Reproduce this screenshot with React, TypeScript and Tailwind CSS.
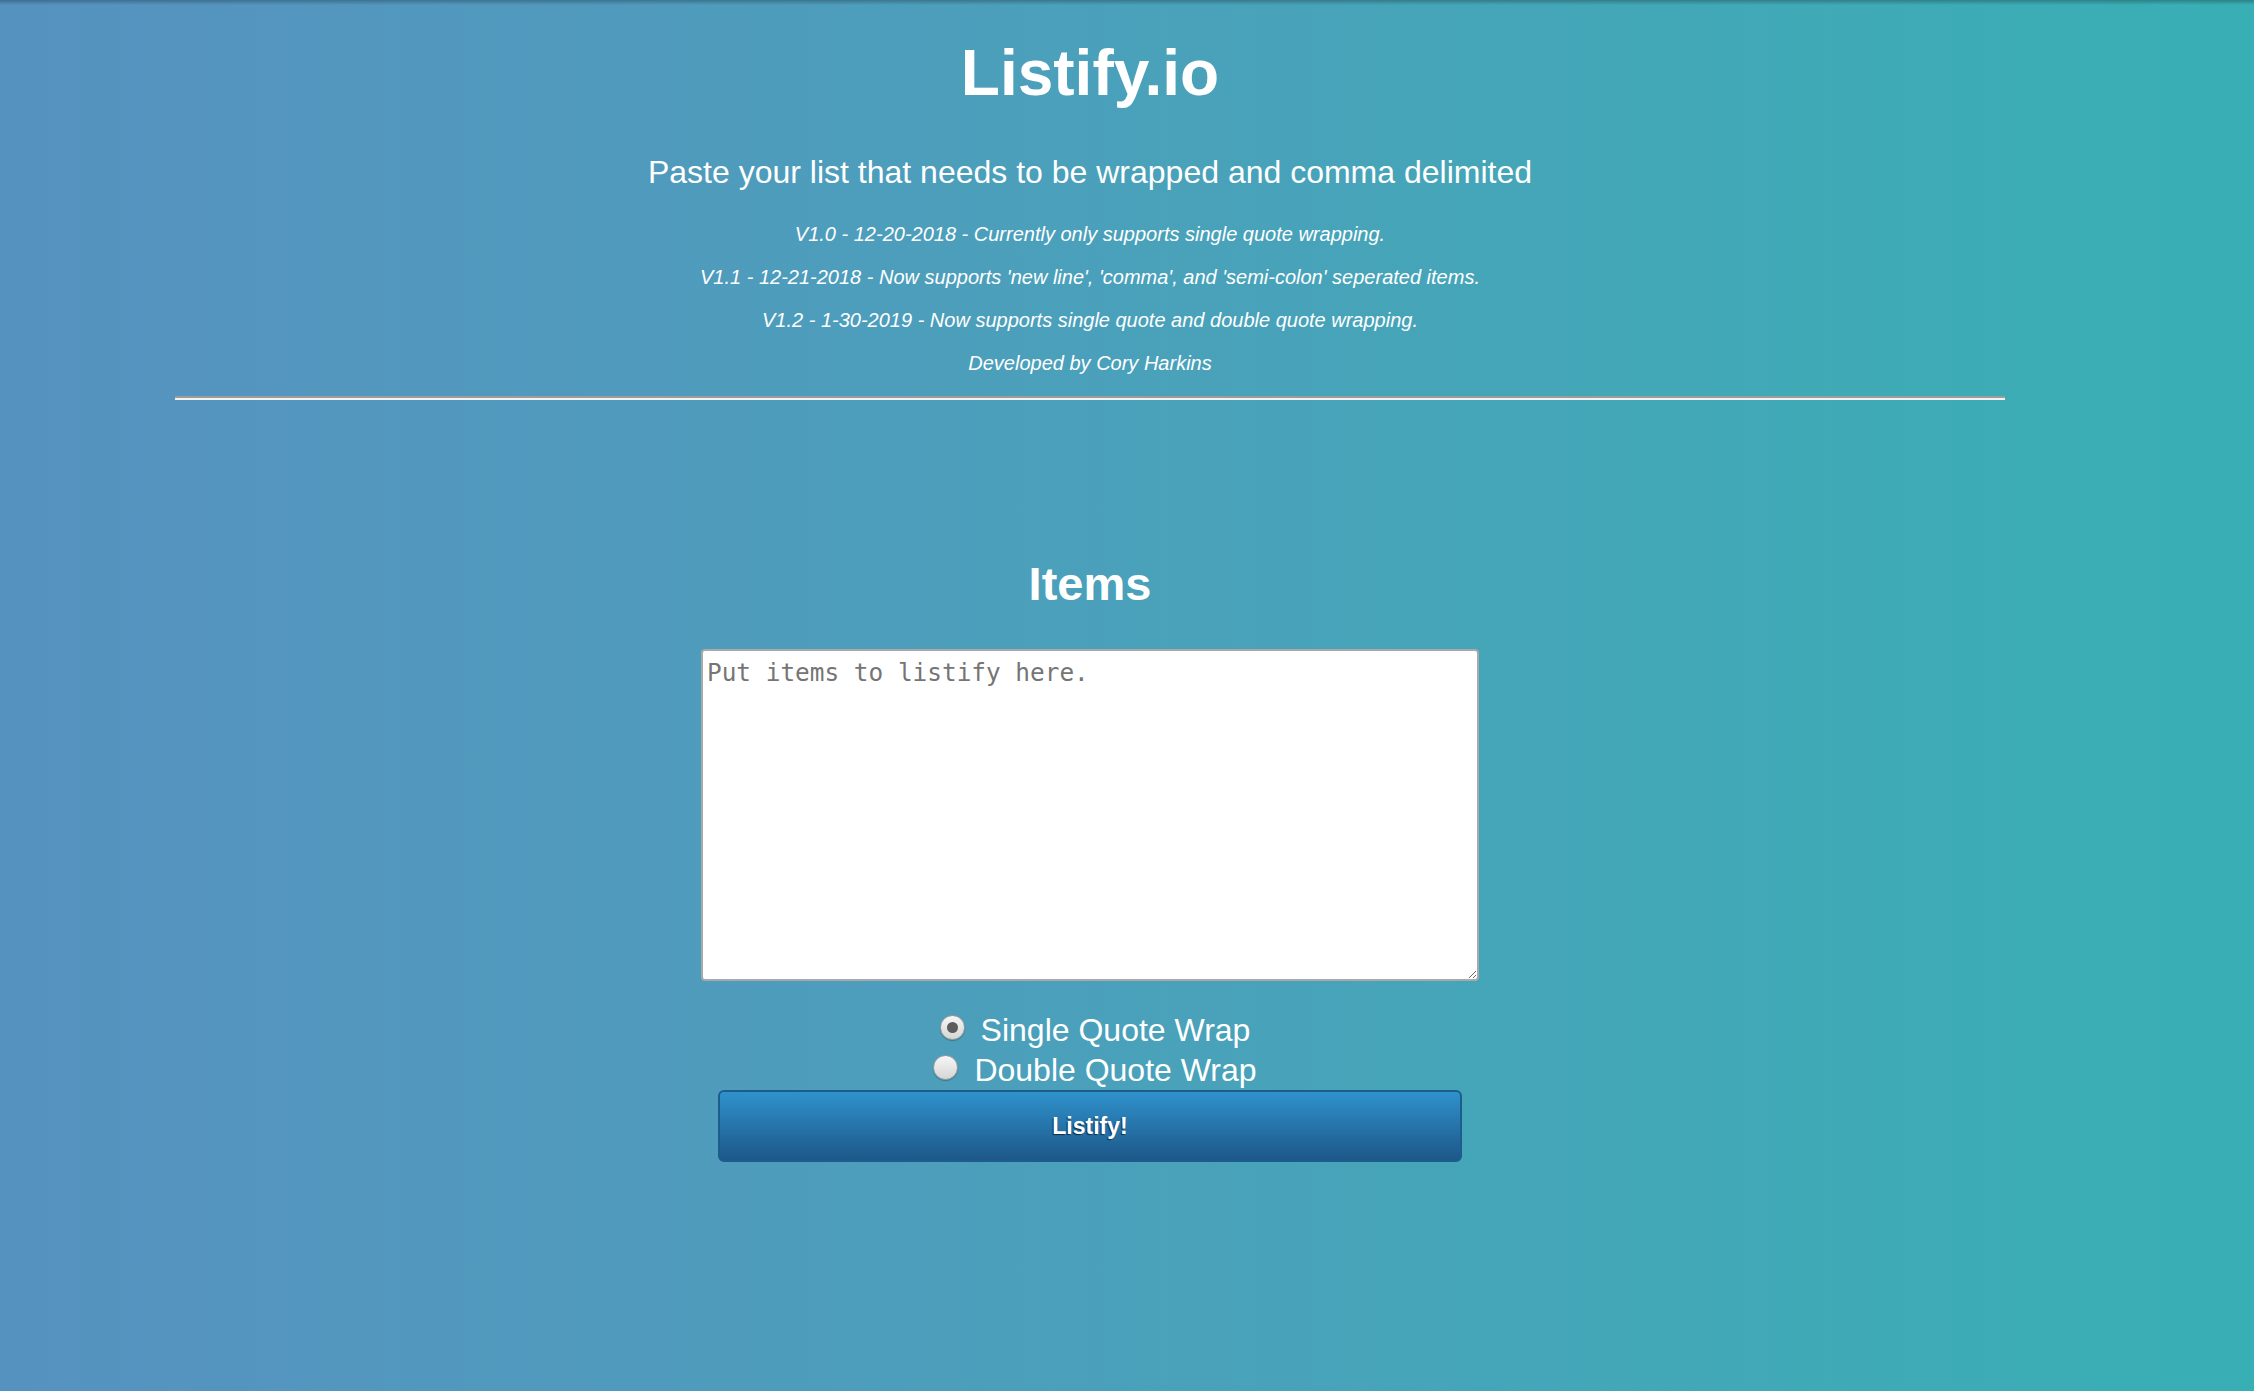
import React from "react";

function Radio({ checked }: { checked?: boolean }) {
  return (
    <span className="mb-[6px] ml-[10px] mr-[16px] flex h-[25px] w-[25px] shrink-0 items-center justify-center rounded-full border border-[#9b9b9b] bg-gradient-to-b from-[#f6f6f6] to-[#d6d6d6] shadow-[0_1px_1px_rgba(0,0,0,0.25)]">
      {checked && <span className="block h-[11px] w-[11px] rounded-full bg-[#5c5c5c]" />}
    </span>
  );
}

export default function App() {
  return (
    <div className="relative min-h-[1391px] w-full overflow-hidden bg-gradient-to-r from-[#5692c0] to-[#38afb4] font-['Liberation_Sans',Arial,sans-serif] text-white">
      <div className="pointer-events-none absolute left-0 right-0 top-0 h-[5px] bg-gradient-to-b from-black/25 to-transparent" />
      <div className="flex w-[2180px] flex-col items-center">
        <h1 className="mt-[36px] text-[64px] font-bold leading-[74px]">Listify.io</h1>
        <p className="mt-[44px] text-[32px] leading-[37px]">
          Paste your list that needs to be wrapped and comma delimited
        </p>
        <div className="mt-[32px] flex flex-col items-center gap-[20px] text-[20px] italic leading-[23px]">
          <p>V1.0 - 12-20-2018 - Currently only supports single quote wrapping.</p>
          <p>V1.1 - 12-21-2018 - Now supports 'new line', 'comma', and 'semi-colon' seperated items.</p>
          <p>V1.2 - 1-30-2019 - Now supports single quote and double quote wrapping.</p>
          <p>Developed by Cory Harkins</p>
        </div>
        <div className="mt-[21px] h-[4px] w-[1830px] border-b-2 border-t-2 border-b-[#f2f2f2] border-t-[#9c9c9c]" />
        <h2 className="mt-[157px] text-[47px] font-bold leading-[54px]">Items</h2>
        <textarea
          className="mt-[38px] h-[332px] w-[778px] resize rounded-[4px] border-2 border-[#a9a9a9] bg-white px-[4px] pt-[8px] font-['DejaVu_Sans_Mono',monospace] text-[24.4px] leading-[28px] text-black placeholder:text-[#757575] focus:outline-none"
          placeholder="Put items to listify here."
        />
        <div className="mt-[29px] flex flex-col items-center text-[32px]">
          <label className="flex h-[40px] items-center">
            <Radio checked />
            <span className="leading-[37px]">Single Quote Wrap</span>
          </label>
          <label className="flex h-[40px] items-center">
            <Radio />
            <span className="leading-[37px]">Double Quote Wrap</span>
          </label>
        </div>
        <button className="h-[72px] w-[744px] rounded-[6px] border-2 border-[#1d5d8c] bg-gradient-to-b from-[#2f92cc] to-[#1d5889] text-[23px] font-bold text-white [text-shadow:-1px_1px_1px_rgba(0,0,0,0.6)]">
          Listify!
        </button>
      </div>
    </div>
  );
}
